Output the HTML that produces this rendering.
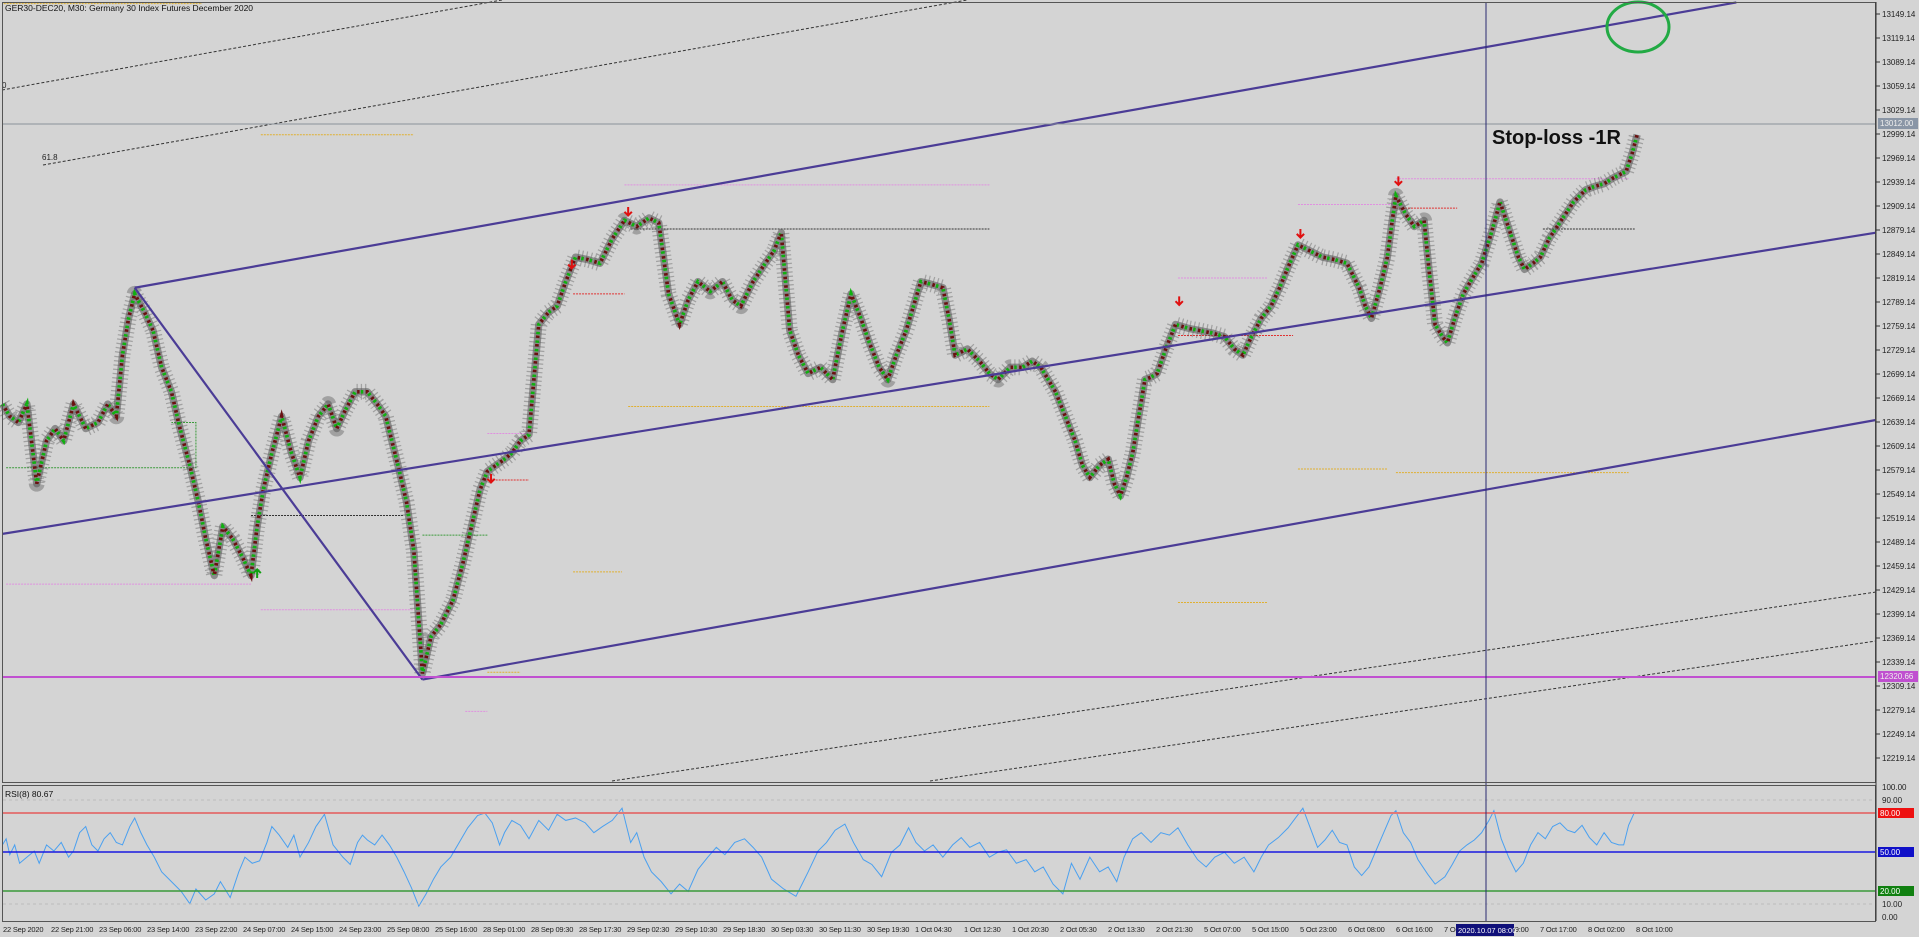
<!DOCTYPE html>
<html><head><meta charset="utf-8"><style>
html,body{margin:0;padding:0;background:#d4d4d4;overflow:hidden}
svg{display:block;font-family:"Liberation Sans",sans-serif}
</style></head><body>
<svg width="1919" height="937" viewBox="0 0 1919 937" xmlns="http://www.w3.org/2000/svg">
<defs>
<polyline id="pp" points="2,330 8,340 15,345 22,330 30,395 38,360 45,350 52,360 60,330 70,350 80,345 88,330 95,340 100,290 105,260 110,240 118,255 125,270 132,300 140,320 147,350 155,380 162,410 168,440 175,470 182,430 190,440 198,455 205,470 210,430 215,400 222,370 230,340 238,370 245,390 252,360 260,340 268,330 275,350 282,335 290,320 300,320 308,330 315,340 325,380 332,410 338,450 345,550 352,520 360,510 370,490 378,460 385,430 392,400 398,385 405,380 412,375 418,370 425,360 432,355 440,265 448,255 455,250 462,230 470,210 480,212 490,215 500,195 510,180 520,185 530,178 538,182 546,240 555,265 562,245 570,230 580,238 590,230 598,245 605,250 615,230 625,215 632,205 638,190 645,270 652,290 660,305 670,300 680,310 688,270 695,240 703,260 710,280 718,300 725,310 732,290 740,270 746,250 752,230 760,232 770,235 775,260 780,290 790,285 800,295 808,305 815,310 825,300 835,300 843,295 850,300 862,320 870,340 878,360 884,380 890,390 898,380 905,375 910,395 915,405 920,390 925,370 930,340 935,310 940,308 945,305 952,285 960,265 970,268 980,270 990,272 1000,275 1008,285 1015,290 1022,275 1030,260 1038,250 1045,235 1052,218 1060,200 1070,205 1080,210 1090,212 1100,215 1110,235 1115,250 1120,260 1127,235 1133,210 1137,180 1140,160 1148,175 1155,185 1163,180 1167,220 1172,265 1178,275 1182,280 1188,260 1195,240 1202,228 1210,215 1218,190 1225,165 1230,180 1235,195 1240,210 1245,220 1252,215 1258,210 1265,195 1275,180 1285,165 1295,155 1303,152 1310,150 1318,145 1328,140 1333,125 1337,110"/>
</defs>
<rect width="1919" height="937" fill="#d4d4d4"/>
<g transform="scale(1.2245)" fill="none">
 <g stroke-width="1" stroke-dasharray="2,1">
  <line x1="3" y1="3" x2="165" y2="3" stroke="#e0b030" vector-effect="non-scaling-stroke"/>
  <line x1="213" y1="110" x2="338" y2="110" stroke="#e0b030" vector-effect="non-scaling-stroke"/>
  <path d="M5 382H160V345H140" stroke="#3a9a3a" vector-effect="non-scaling-stroke"/>
  <line x1="5" y1="477" x2="205" y2="477" stroke="#e090e0" vector-effect="non-scaling-stroke"/>
  <line x1="213" y1="498" x2="338" y2="498" stroke="#e090e0" vector-effect="non-scaling-stroke"/>
  <line x1="205" y1="421" x2="330" y2="421" stroke="#333" vector-effect="non-scaling-stroke"/>
  <line x1="345" y1="437" x2="398" y2="437" stroke="#3a9a3a" vector-effect="non-scaling-stroke"/>
  <line x1="395" y1="392" x2="432" y2="392" stroke="#e03030" vector-effect="non-scaling-stroke"/>
  <line x1="398" y1="354" x2="432" y2="354" stroke="#e090e0" vector-effect="non-scaling-stroke"/>
  <line x1="468" y1="240" x2="510" y2="240" stroke="#e03030" vector-effect="non-scaling-stroke"/>
  <line x1="468" y1="467" x2="508" y2="467" stroke="#e0b030" vector-effect="non-scaling-stroke"/>
  <line x1="510" y1="151" x2="808" y2="151" stroke="#e090e0" vector-effect="non-scaling-stroke"/>
  <line x1="515" y1="187" x2="808" y2="187" stroke="#333" vector-effect="non-scaling-stroke"/>
  <line x1="513" y1="332" x2="808" y2="332" stroke="#e0b030" vector-effect="non-scaling-stroke"/>
  <line x1="962" y1="227" x2="1035" y2="227" stroke="#e090e0" vector-effect="non-scaling-stroke"/>
  <line x1="962" y1="274" x2="1056" y2="274" stroke="#e03030" vector-effect="non-scaling-stroke"/>
  <line x1="962" y1="492" x2="1035" y2="492" stroke="#e0b030" vector-effect="non-scaling-stroke"/>
  <line x1="1060" y1="167" x2="1140" y2="167" stroke="#e090e0" vector-effect="non-scaling-stroke"/>
  <line x1="1140" y1="170" x2="1190" y2="170" stroke="#e03030" vector-effect="non-scaling-stroke"/>
  <line x1="1060" y1="383" x2="1133" y2="383" stroke="#e0b030" vector-effect="non-scaling-stroke"/>
  <line x1="1140" y1="386" x2="1330" y2="386" stroke="#e0b030" vector-effect="non-scaling-stroke"/>
  <line x1="1140" y1="146" x2="1330" y2="146" stroke="#e090e0" vector-effect="non-scaling-stroke"/>
  <line x1="1260" y1="187" x2="1335" y2="187" stroke="#333" vector-effect="non-scaling-stroke"/>
  <line x1="380" y1="581" x2="398" y2="581" stroke="#e090e0" vector-effect="non-scaling-stroke"/>
  <line x1="398" y1="549" x2="425" y2="549" stroke="#e0b030" vector-effect="non-scaling-stroke"/>
 </g>
 <use href="#pp" stroke="#555" stroke-width="13" stroke-opacity="0.4" stroke-dasharray="1,2.5" stroke-linejoin="round" vector-effect="non-scaling-stroke"/>
 <use href="#pp" stroke="#5a5a5a" stroke-width="6" stroke-opacity="0.6" stroke-linejoin="round" vector-effect="non-scaling-stroke"/>
 <use href="#pp" stroke="#10b010" stroke-width="3" stroke-dasharray="2,5" vector-effect="non-scaling-stroke"/>
 <use href="#pp" stroke="#6a1010" stroke-width="3" stroke-dasharray="2,5" stroke-dashoffset="3" vector-effect="non-scaling-stroke"/>
 <g stroke="#4b3c96" stroke-width="2.2">
  <line x1="110" y1="235" x2="1418" y2="2" vector-effect="non-scaling-stroke"/>
  <line x1="2" y1="436" x2="1532" y2="190" vector-effect="non-scaling-stroke"/>
  <line x1="345" y1="555" x2="1532" y2="343" vector-effect="non-scaling-stroke"/>
  <line x1="110" y1="235" x2="345" y2="555" vector-effect="non-scaling-stroke"/>
 </g>
 <g stroke="#e01010" stroke-width="2">
  <path d="M513 169V176M510 173L513 176L516 173" vector-effect="non-scaling-stroke"/>
  <path d="M467 212V219M464 216L467 219L470 216" vector-effect="non-scaling-stroke"/>
  <path d="M401 387V394M398 391L401 394L404 391" vector-effect="non-scaling-stroke"/>
  <path d="M963 242V249M960 246L963 249L966 246" vector-effect="non-scaling-stroke"/>
  <path d="M1062 187V194M1059 191L1062 194L1065 191" vector-effect="non-scaling-stroke"/>
  <path d="M1142 144V151M1139 148L1142 151L1145 148" vector-effect="non-scaling-stroke"/>
 </g>
 <path d="M210 472V465M207 468L210 465L213 468" stroke="#10a010" stroke-width="2" vector-effect="non-scaling-stroke"/>
 <polyline stroke="#4aa0f0" stroke-width="1" vector-effect="non-scaling-stroke" points="2,690 5,685 8,698 12,690 16,705 22,700 28,695 32,705 38,690 44,695 50,688 56,700 60,695 65,680 70,675 75,690 80,695 85,685 90,680 95,688 100,690 106,675 110,668 115,680 120,690 126,700 132,712 140,720 148,728 155,738 160,726 168,735 175,730 180,720 188,733 195,712 200,700 206,705 212,703 218,688 222,675 228,682 235,692 240,682 245,700 252,688 258,675 265,665 272,690 280,700 286,706 292,688 296,682 300,686 306,690 312,682 318,690 324,700 330,712 336,725 342,740 348,730 354,718 360,708 368,700 375,688 382,676 390,666 396,664 402,672 408,690 412,680 418,670 425,674 432,685 440,670 448,678 455,665 462,670 470,668 478,672 485,680 492,675 500,670 508,660 515,688 520,680 526,700 532,712 540,720 548,730 555,722 562,728 570,710 578,700 585,692 592,698 600,688 608,685 615,692 622,700 630,718 640,726 650,732 655,722 660,712 668,695 675,688 682,678 690,673 697,688 705,702 712,706 720,716 728,696 735,690 742,676 748,688 755,695 762,690 770,700 778,690 785,684 792,692 800,688 808,700 815,696 822,694 830,705 838,702 845,712 852,708 860,722 868,730 875,705 882,718 890,700 898,712 905,708 912,720 918,700 925,685 932,680 940,688 948,680 955,682 962,676 970,690 978,702 985,708 992,700 1000,696 1008,705 1016,700 1024,712 1030,700 1036,690 1044,684 1052,676 1058,668 1064,660 1070,676 1076,692 1082,686 1088,678 1094,688 1100,690 1106,708 1112,715 1118,708 1124,694 1130,680 1136,666 1140,662 1146,680 1152,688 1158,702 1166,714 1172,722 1180,716 1186,706 1192,695 1198,690 1204,686 1210,680 1216,670 1220,662 1226,685 1232,700 1238,712 1244,705 1250,690 1256,680 1262,685 1268,675 1274,672 1280,678 1286,680 1292,674 1298,684 1304,690 1310,680 1316,688 1322,690 1326,690 1330,674 1335,663"/>
</g>
<g stroke="#333" stroke-dasharray="3,2" fill="none">
 <line x1="2" y1="90" x2="502" y2="0"/><line x1="43" y1="165" x2="967" y2="0"/>
 <line x1="612" y1="781" x2="1876" y2="592"/><line x1="930" y1="781" x2="1876" y2="641"/>
 <line x1="3" y1="800" x2="1876" y2="800" stroke="#bbb" stroke-dasharray="3,3"/>
 <line x1="3" y1="904" x2="1876" y2="904" stroke="#bbb" stroke-dasharray="3,3"/>
</g>
<line x1="3" y1="813" x2="1876" y2="813" stroke="#e07878" stroke-width="2"/>
<line x1="3" y1="852" x2="1876" y2="852" stroke="#1818e0" stroke-width="1.5"/>
<line x1="3" y1="891" x2="1876" y2="891" stroke="#3a9a3a" stroke-width="1.5"/>
<text x="2" y="88" font-size="8" fill="#222">0</text>
<text x="42" y="160" font-size="8" fill="#222">61.8</text>
<line x1="2" y1="124" x2="1876" y2="124" stroke="#8a929a"/>
<line x1="2" y1="677" x2="1876" y2="677" stroke="#c050d0" stroke-width="2"/>
<line x1="1486" y1="2" x2="1486" y2="921" stroke="#2a2a70"/>
<ellipse cx="1638" cy="27" rx="31" ry="25" fill="none" stroke="#22aa44" stroke-width="3"/>
<text x="1492" y="144" font-size="20" font-weight="bold" fill="#111">Stop-loss -1R</text>
<rect x="2.5" y="2.5" width="1873" height="780" fill="none" stroke="#555"/>
<rect x="2.5" y="785.5" width="1873" height="136" fill="none" stroke="#555"/>
<text x="5" y="11" font-size="8.5" fill="#111">GER30-DEC20, M30:  Germany 30 Index Futures December 2020</text>
<text x="5" y="797" font-size="8.5" fill="#111">RSI(8) 80.67</text>
<g stroke="#333">
<path d="M1876 14h4M1876 38h4M1876 62h4M1876 86h4M1876 110h4M1876 134h4M1876 158h4M1876 182h4M1876 206h4M1876 230h4M1876 254h4M1876 278h4M1876 302h4M1876 326h4M1876 350h4M1876 374h4M1876 398h4M1876 422h4M1876 446h4M1876 470h4M1876 494h4M1876 518h4M1876 542h4M1876 566h4M1876 590h4M1876 614h4M1876 638h4M1876 662h4M1876 686h4M1876 710h4M1876 734h4M1876 758h4"/>
</g>
<g font-size="8" fill="#222">
<text x="1882" y="17">13149.14</text><text x="1882" y="41">13119.14</text><text x="1882" y="65">13089.14</text><text x="1882" y="89">13059.14</text><text x="1882" y="113">13029.14</text><text x="1882" y="137">12999.14</text><text x="1882" y="161">12969.14</text><text x="1882" y="185">12939.14</text><text x="1882" y="209">12909.14</text><text x="1882" y="233">12879.14</text><text x="1882" y="257">12849.14</text><text x="1882" y="281">12819.14</text><text x="1882" y="305">12789.14</text><text x="1882" y="329">12759.14</text><text x="1882" y="353">12729.14</text><text x="1882" y="377">12699.14</text><text x="1882" y="401">12669.14</text><text x="1882" y="425">12639.14</text><text x="1882" y="449">12609.14</text><text x="1882" y="473">12579.14</text><text x="1882" y="497">12549.14</text><text x="1882" y="521">12519.14</text><text x="1882" y="545">12489.14</text><text x="1882" y="569">12459.14</text><text x="1882" y="593">12429.14</text><text x="1882" y="617">12399.14</text><text x="1882" y="641">12369.14</text><text x="1882" y="665">12339.14</text><text x="1882" y="689">12309.14</text><text x="1882" y="713">12279.14</text><text x="1882" y="737">12249.14</text><text x="1882" y="761">12219.14</text>
<text x="1882" y="790">100.00</text><text x="1882" y="803">90.00</text><text x="1882" y="907">10.00</text><text x="1882" y="920">0.00</text>
</g>
<rect x="1878" y="118" width="40" height="11" fill="#8a96a6"/><text x="1880" y="126" font-size="8" fill="#eee">13012.00</text>
<rect x="1878" y="671" width="40" height="11" fill="#c050d0"/><text x="1880" y="679" font-size="8" fill="#eee">12320.66</text>
<rect x="1878" y="808" width="36" height="10" fill="#ee1010"/><text x="1880" y="816" font-size="8" fill="#fff">80.00</text>
<rect x="1878" y="847" width="36" height="10" fill="#1010c8"/><text x="1880" y="855" font-size="8" fill="#fff">50.00</text>
<rect x="1878" y="886" width="36" height="10" fill="#108010"/><text x="1880" y="894" font-size="8" fill="#fff">20.00</text>
<line x1="1876" y1="2" x2="1876" y2="921" stroke="#333"/>
<g font-size="7.5" fill="#222" letter-spacing="-0.2">
<text x="3" y="932">22 Sep 2020</text><text x="51" y="932">22 Sep 21:00</text><text x="99" y="932">23 Sep 06:00</text><text x="147" y="932">23 Sep 14:00</text><text x="195" y="932">23 Sep 22:00</text><text x="243" y="932">24 Sep 07:00</text><text x="291" y="932">24 Sep 15:00</text><text x="339" y="932">24 Sep 23:00</text><text x="387" y="932">25 Sep 08:00</text><text x="435" y="932">25 Sep 16:00</text><text x="483" y="932">28 Sep 01:00</text><text x="531" y="932">28 Sep 09:30</text><text x="579" y="932">28 Sep 17:30</text><text x="627" y="932">29 Sep 02:30</text><text x="675" y="932">29 Sep 10:30</text><text x="723" y="932">29 Sep 18:30</text><text x="771" y="932">30 Sep 03:30</text><text x="819" y="932">30 Sep 11:30</text><text x="867" y="932">30 Sep 19:30</text><text x="915" y="932">1 Oct 04:30</text><text x="964" y="932">1 Oct 12:30</text><text x="1012" y="932">1 Oct 20:30</text><text x="1060" y="932">2 Oct 05:30</text><text x="1108" y="932">2 Oct 13:30</text><text x="1156" y="932">2 Oct 21:30</text><text x="1204" y="932">5 Oct 07:00</text><text x="1252" y="932">5 Oct 15:00</text><text x="1300" y="932">5 Oct 23:00</text><text x="1348" y="932">6 Oct 08:00</text><text x="1396" y="932">6 Oct 16:00</text><text x="1444" y="932">7 Oct 00:00</text><text x="1492" y="932">7 Oct 09:00</text><text x="1540" y="932">7 Oct 17:00</text><text x="1588" y="932">8 Oct 02:00</text><text x="1636" y="932">8 Oct 10:00</text>
</g>
<rect x="1456" y="924" width="58" height="12" fill="#10107a"/><text x="1458" y="933" font-size="7.5" fill="#fff">2020.10.07 08:00</text>
</svg>
</body></html>
